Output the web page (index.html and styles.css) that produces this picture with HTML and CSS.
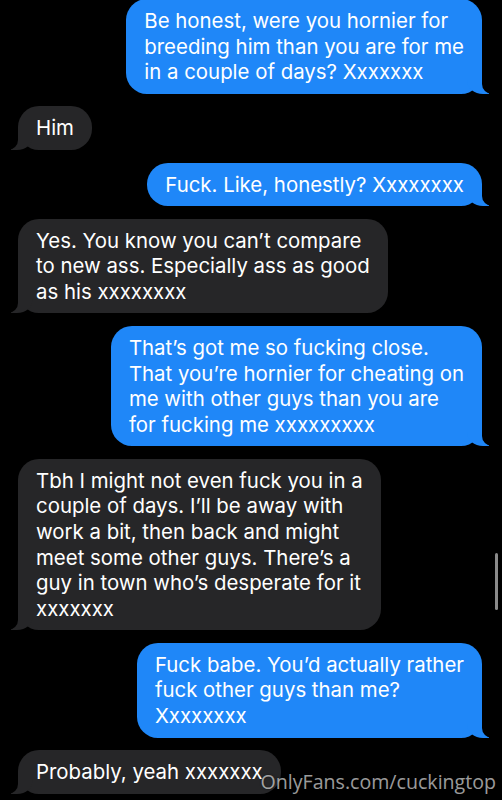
FILE: index.html
```html
<!DOCTYPE html>
<html lang="en">
<head>
	<meta charset="UTF-8">
	<link rel="stylesheet" href="styles.css">
</head>
<body>
<div class="thread">
	<div class="msg out">Be honest, were you hornier for<br>breeding him than you are for me<br>in a couple of days? Xxxxxxx</div>
	<div class="msg in">Him</div>
	<div class="msg out">Fuck. Like, honestly? Xxxxxxxx</div>
	<div class="msg in">Yes. You know you can’t compare<br>to new ass. Especially ass as good<br>as his xxxxxxxx</div>
	<div class="msg out">That’s got me so fucking close.<br>That you’re hornier for cheating on<br>me with other guys than you are<br>for fucking me xxxxxxxxx</div>
	<div class="msg in">Tbh I might not even fuck you in a<br>couple of days. I’ll be away with<br>work a bit, then back and might<br>meet some other guys. There’s a<br>guy in town who’s desperate for it<br>xxxxxxx</div>
	<div class="msg out">Fuck babe. You’d actually rather<br>fuck other guys than me?<br>Xxxxxxxx</div>
	<div class="msg in">Probably, yeah xxxxxxx</div>
</div>
<div class="scroll"></div>
<div class="mark">OnlyFans.com/cuckingtop</div>
</body>
</html>
```
FILE: styles.css
```css
*{
	margin:0; padding:0; box-sizing:border-box;
}
html,body{
	background:#000;
	height:100%;
	overflow:hidden;
}
body{
	font-family:Inter, "Liberation Sans", sans-serif;
	color:#fff;
	position:relative;
}
.thread{
	display:flex; flex-direction:column;
	gap:12.5px;
	padding:0 20px 0 18px;
	margin-top:-0.8px;
}
.msg{
	position:relative;
	width:fit-content;
	padding:9px 18px;
	border-radius:21px;
	font-size:20.4px; line-height:25.6px;
	white-space:nowrap;
}
.out{
	align-self:flex-end;
	background:#1f87f8;
}
.in{
	align-self:flex-start;
	background:#262628;
}

/* bubble tails */
.msg::before,
.msg::after{
	content:""; position:absolute; bottom:0;
	height:22px;
}
.out::before{
	right:-7px; width:22px;
	background:#1f87f8;
	border-bottom-left-radius:16px 14px;
}
.out::after{
	right:-26px; width:26px;
	background:#000;
	border-bottom-left-radius:10px;
}
.in::before{
	left:-7px; width:22px;
	background:#262628;
	border-bottom-right-radius:16px 14px;
}
.in::after{
	left:-26px; width:26px;
	background:#000;
	border-bottom-right-radius:10px;
}

.scroll{
	position:absolute; left:495px; top:553px;
	width:3px; height:57px;
	border-radius:2px;
	background:#8a8a8a;
}
.mark{
	position:absolute; right:6px; bottom:5px;
	font-family:"Open Sans", sans-serif;
	font-size:19.6px;
	color:rgba(225,225,225,.7);
	text-shadow:0 0 2px rgba(0,0,0,.5);
}
```
